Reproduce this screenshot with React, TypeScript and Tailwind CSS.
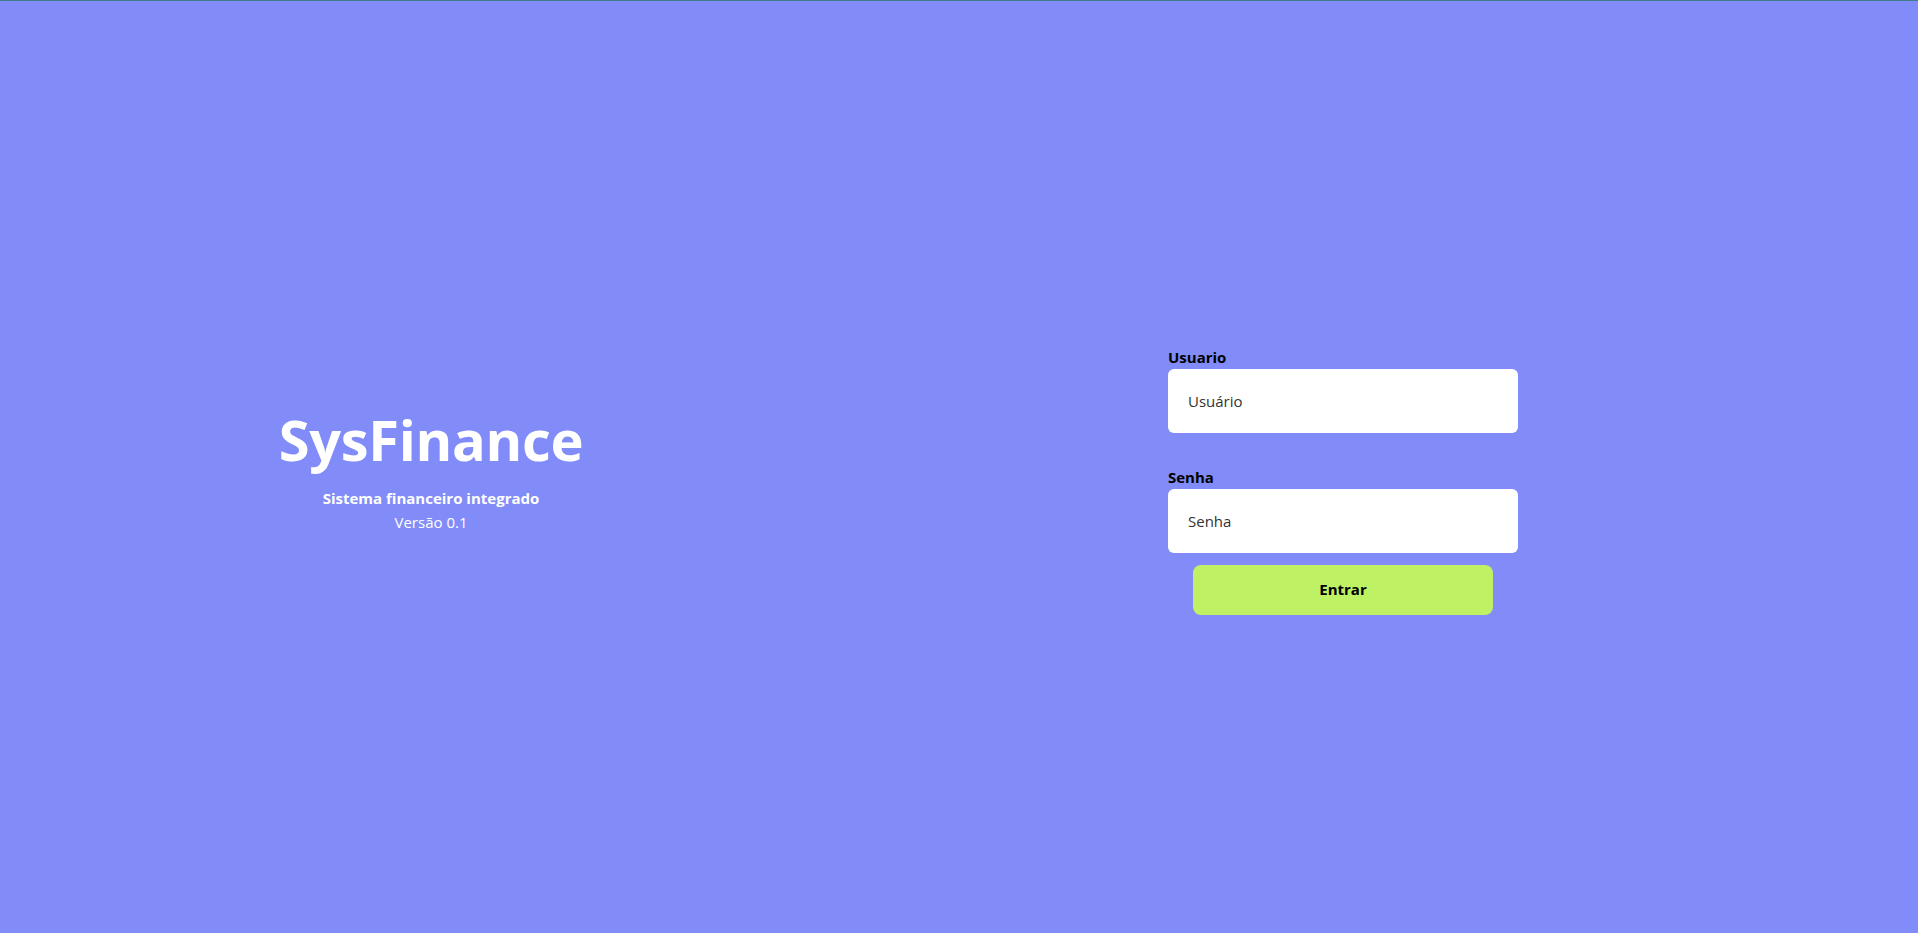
import React, { useState } from 'react';

const Login = () => {
  const [usuario, setUsuario] = useState('');
  const [senha, setSenha] = useState('');

  return (
    <div className="min-h-screen w-full bg-[#818cf8] border-t border-[#3f7d8c] font-['Open_Sans',sans-serif] flex items-center">
      {/* Brand */}
      <div className="w-[862px] flex flex-col items-center text-white mt-[10px]">
        <h1 className="text-[56px] leading-none font-bold tracking-[-0.3px]">SysFinance</h1>
        <p className="mt-[19px] text-[15px] font-bold leading-[24px]">Sistema financeiro integrado</p>
        <p className="text-[15px] leading-[24px]">Versão 0.1</p>
      </div>

      {/* Form */}
      <form
        className="ml-[306px] w-[350px] flex flex-col mt-[25px]"
        onSubmit={(e) => e.preventDefault()}
      >
        <label className="text-[15px] font-bold text-black leading-[24px]">Usuario</label>
        <input
          value={usuario}
          onChange={(e) => setUsuario(e.target.value)}
          placeholder="Usuário"
          className="h-[64px] rounded-md bg-white px-5 text-[15px] text-[#333] placeholder:text-[#333] outline-none"
        />
        <label className="mt-8 text-[15px] font-bold text-black leading-[24px]">Senha</label>
        <input
          type="password"
          value={senha}
          onChange={(e) => setSenha(e.target.value)}
          placeholder="Senha"
          className="h-[64px] rounded-md bg-white px-5 text-[15px] text-[#333] placeholder:text-[#333] outline-none"
        />
        <button
          type="submit"
          className="mt-3 mx-auto w-[300px] h-[50px] rounded-lg bg-[#bef264] text-[15px] font-bold text-black"
        >
          Entrar
        </button>
      </form>
    </div>
  );
};

export default function App() {
  return <Login />;
}
